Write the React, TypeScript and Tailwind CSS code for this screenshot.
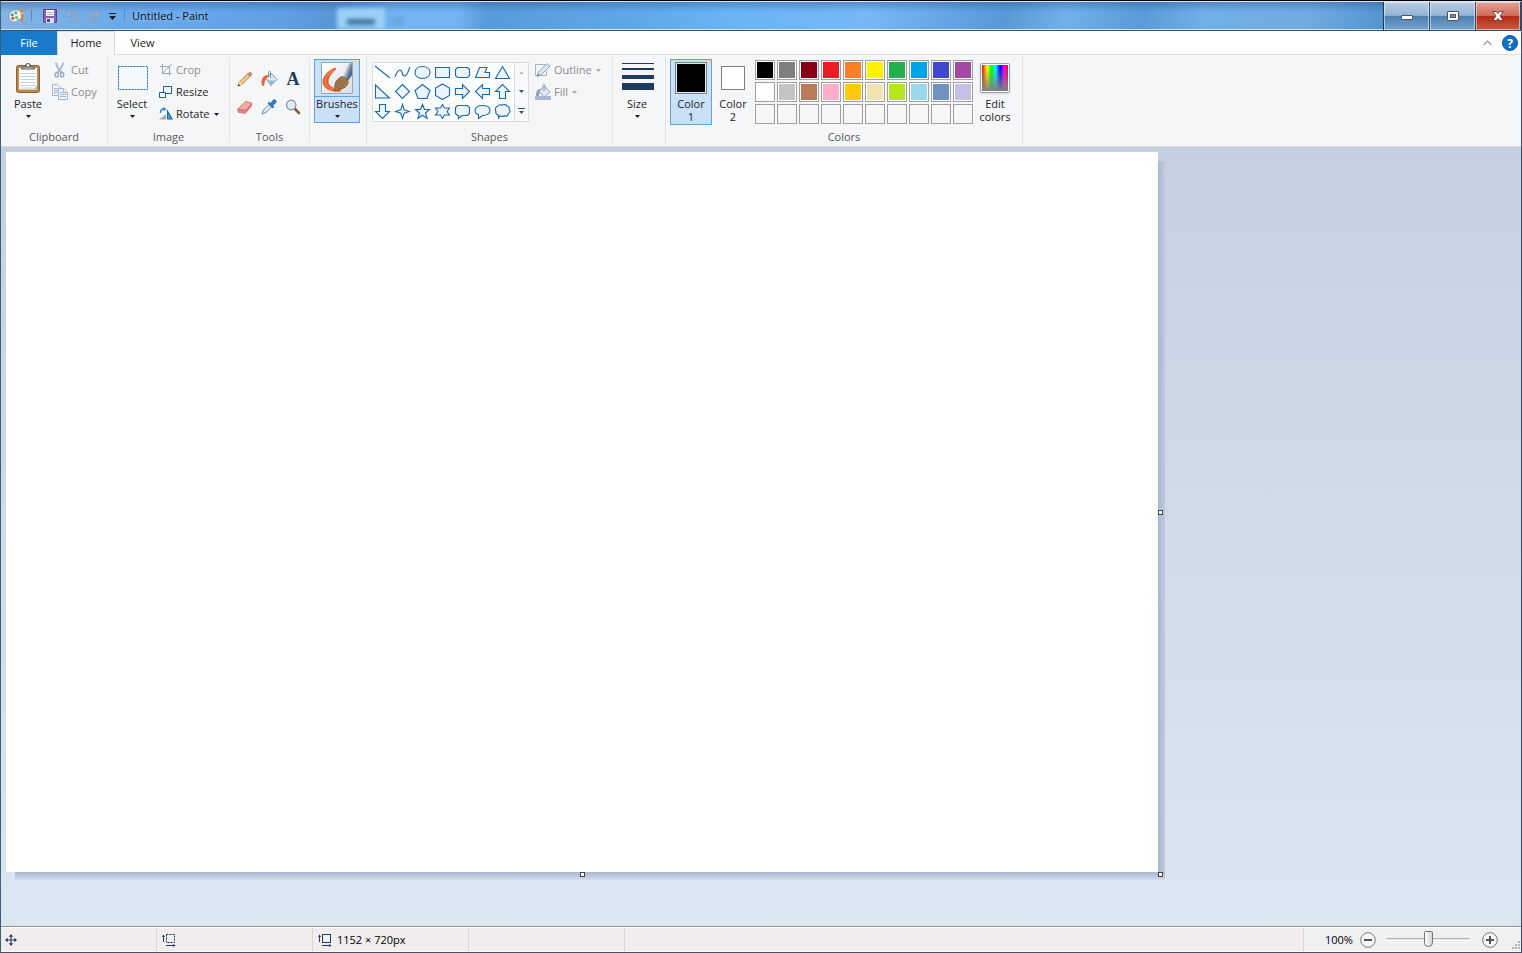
import type { ReactNode } from "react";

function Caret({ color = "#1e1e1e" }: { color?: string }) {
  return (
    <svg width="5" height="3" viewBox="0 0 5 3" className="shrink-0" aria-hidden="true">
      <path d="M0 0h5L2.5 3z" fill={color} />
    </svg>
  );
}

function Group({ label, className, children }: { label?: string; className: string; children: ReactNode }) {
  return (
    <section className={`flex shrink-0 flex-col pt-0.5 pb-[3px] ${className}`} aria-label={label}>
      <div className="flex min-h-0 flex-1 flex-col border-r border-[#e2e3e4]">
        <div className="flex h-[72px] shrink-0 items-start pt-0.5">{children}</div>
        <div className="text-center leading-4 text-[#5a5a5a]">{label}</div>
      </div>
    </section>
  );
}

function SmallButton({ icon, label, disabled, caret }: { icon: ReactNode; label: string; disabled?: boolean; caret?: boolean }) {
  return (
    <button disabled={disabled} className="flex h-[22px] items-center gap-[3px] text-[#1e1e1e] disabled:text-[#8d8d8d]">
      {icon}
      <span>{label}</span>
      {caret && (
        <span className="ml-px">
          <Caret color={disabled ? "#a8a8a8" : "#1e1e1e"} />
        </span>
      )}
    </button>
  );
}

function BigButton({ icon, label, className = "" }: { icon: ReactNode; label: string; className?: string }) {
  return (
    <button className={`flex h-16 flex-col items-center pt-[3px] text-[#1e1e1e] ${className}`}>
      {icon}
      <span className="mt-0.5 leading-4">{label}</span>
      <span className="mt-[3px]">
        <Caret />
      </span>
    </button>
  );
}

/* ---------- title bar icons ---------- */

function PaintLogo() {
  return (
    <svg width="17" height="17" viewBox="0 0 17 17" aria-hidden="true">
      <path d="M8 3C3.500 3 1 6 1 9.500c0 3.200 2.400 5.500 6 5.500 2.200 0 1.800-1.800 3-2.400 1.600-.8 4.500-.2 4.500-3.600C14.500 5.500 12 3 8 3z" fill="#e3f1f7" stroke="#6ea3bb" strokeWidth=".8" />
      <circle cx="4.300" cy="8" r="1.400" fill="#3a8bd0" />
      <circle cx="7.800" cy="5.800" r="1.400" fill="#45ad3e" />
      <circle cx="4.800" cy="11.500" r="1.400" fill="#d94b3a" />
      <circle cx="8.500" cy="10.500" r="1.500" fill="#58bd4f" />
      <path d="M12.700 6h3l-.6 9.500h-1.600z" fill="#e2812b" />
      <path d="M12.500 6c-.7-2 .8-2.600 1.500-5.500 1.200 1.600 2.300 3.600 1.700 5.500z" fill="#d9874a" />
      <path d="M12.500 5.500h3.200v1.600h-3.200z" fill="#c7cdd2" />
    </svg>
  );
}

function SaveIcon() {
  return (
    <svg width="14" height="14" viewBox="0 0 14 14" aria-hidden="true">
      <path d="M.5.500h13v13H1.500l-1-1z" fill="#8a5fb0" stroke="#5e3c8c" />
      <path d="M3 1h8v6H3z" fill="#f7f7fb" />
      <path d="M4 3.500h6M4 5.500h6" stroke="#b5b3cb" />
      <path d="M3 9h8v5H3z" fill="#d8dce6" />
      <path d="M4 10h3v3H4z" fill="#574679" />
    </svg>
  );
}

function UndoIcon({ flip }: { flip?: boolean }) {
  return (
    <svg width="14" height="14" viewBox="0 0 14 14" className={flip ? "-scale-x-100" : ""} aria-hidden="true">
      <path d="M1 1v6.500h6.500L5.300 5.300c3-1 5 .2 5 2.700 0 1.800-1.500 3-3.300 4.200l.5 1.300c3.500-.8 5.500-3 5.500-6C13 3.500 8.500 1 3.500 3.500z" fill="#93add0" stroke="#7b99c2" strokeWidth=".8" />
    </svg>
  );
}

/* ---------- clipboard and image icons ---------- */

function PasteIcon() {
  return (
    <svg width="26" height="32" viewBox="0 0 26 32" className="shrink-0" aria-hidden="true">
      <rect x="1.500" y="3.500" width="23" height="27" rx="2" fill="#b98b50" stroke="#8a612e" />
      <path d="M4 6h18v21.500H4z" fill="#fff" />
      <path d="M5 11.500h16M5 14.500h16M5 17.500h16M5 20.500h16M5 23.500h16M5 26h13" stroke="#c3d2e2" />
      <path d="M6 7.500c0-2.500 1.500-3 4-3 0-2 1-3.500 3-3.500s3 1.500 3 3.500c2.500 0 4 .5 4 3z" fill="#5f6468" />
      <path d="M8 6h10" stroke="#c9cdd0" />
      <circle cx="13" cy="3.200" r="1.300" fill="#f5f6f7" />
      <path d="M18 27.500l4-4v4z" fill="#b7c4d2" />
    </svg>
  );
}

function CutIcon() {
  return (
    <svg width="16" height="16" viewBox="0 0 16 16" fill="none" aria-hidden="true">
      <path d="M4 .5c0 3.500 1.500 5.500 5.500 10M11 .5c0 3.500-1.500 5.500-5.500 10" stroke="#a9b9d0" strokeWidth="1.900" />
      <ellipse cx="4.800" cy="12.700" rx="1.600" ry="2.200" stroke="#93a9c8" strokeWidth="1.400" />
      <ellipse cx="10.200" cy="12.700" rx="1.600" ry="2.200" stroke="#93a9c8" strokeWidth="1.400" />
    </svg>
  );
}

function CopyIcon() {
  return (
    <svg width="16" height="16" viewBox="0 0 16 16" fill="#eef3f9" stroke="#a5b7d0" aria-hidden="true">
      <path d="M.5.500h5l3 3v8h-8z" />
      <path d="M2 4.500h4M2 6.500h4M2 8.500h4" />
      <path d="M6.500 4.500h5l4 4v7h-9z" />
      <path d="M11.500 4.500v4h4M8 8.500h3M8 10.500h6M8 12.500h6" />
    </svg>
  );
}

function SelectIcon() {
  return (
    <svg width="32" height="32" viewBox="0 0 32 32" className="ml-px shrink-0" aria-hidden="true">
      <rect x="1.500" y="4.500" width="29" height="23" fill="#f3f9fd" stroke="#1a6bb0" strokeDasharray="2 1" />
    </svg>
  );
}

function CropIcon() {
  return (
    <svg width="14" height="16" viewBox="0 0 14 16" fill="none" stroke="#9aaac0" aria-hidden="true">
      <path d="M3.500 2v9.500H13M1 4.500h9.500V14M3.500 11.500l9-9.500" />
    </svg>
  );
}

function ResizeIcon() {
  return (
    <svg width="14" height="16" viewBox="0 0 14 16" fill="#f3f9fd" stroke="#1663a7" aria-hidden="true">
      <path d="M4.500 2.500h8v7h-8z" />
      <path d="M.5 8.500h6v5h-6z" />
    </svg>
  );
}

function RotateIcon() {
  return (
    <svg width="14" height="16" viewBox="0 0 14 16" aria-hidden="true">
      <path d="M0 13.500h7V8z" fill="#a5a9ad" />
      <path d="M8 3l6 10.500H8z" fill="#1b68a9" />
      <path d="M9 7l3 5.500H9z" fill="#4b9bd6" />
      <path d="M1.500 7c0-2.500 1-4 3.500-4" fill="none" stroke="#2c7bd0" strokeWidth="1.400" />
      <path d="M4.500 1l3 2-3 2z" fill="#2c7bd0" />
    </svg>
  );
}

/* ---------- tools ---------- */

const tools: { name: string; icon: ReactNode }[] = [
  {
    name: "Pencil",
    icon: (
      <>
        <path d="M1 15l1.500-4 8.500-8.500 2.500 2.500L5 13.500z" fill="#f1cd76" stroke="#8d7440" strokeWidth=".8" />
        <path d="M2.500 11l2.500 2.500L1 15z" fill="#f0dcc0" />
        <path d="M.8 15.200l.8-2.200 1.500 1.500z" fill="#222" />
        <path d="M10.800 2.800l1.400-1.400c1.500-.5 3 1 2.500 2.400l-1.400 1.400z" fill="#dc8b7b" stroke="#a35d4d" strokeWidth=".6" />
      </>
    ),
  },
  {
    name: "Fill with color",
    icon: (
      <>
        <path d="M5 7.500L10 2l6 6.500-6 6z" fill="#dcebf6" stroke="#6991b4" strokeWidth=".9" />
        <path d="M7 9.500h8l-5 4.500z" fill="#8dbadb" />
        <path d="M7.500 6V1.500c0-1.500 2-1.500 2 0V7" fill="none" stroke="#7d8e9e" />
        <path d="M.8 14C0 9.500 1 5 6 4l2 1.500C5 7 3.800 9 3.300 14c-.5 1.300-2 1.300-2.500 0z" fill="#e8663c" />
      </>
    ),
  },
  {
    name: "Text",
    icon: (
      <text x="8" y="14" textAnchor="middle" fontFamily="Liberation Serif, serif" fontWeight="bold" fontSize="18" fill="#1f3a5f">
        A
      </text>
    ),
  },
  {
    name: "Eraser",
    icon: (
      <>
        <path d="M.7 10L8.500 2.500 15 4l-6.500 7.500z" fill="#f2aaa2" stroke="#c46b64" strokeWidth=".8" />
        <path d="M.7 10l7.800 1.500v3.200L1 13.200z" fill="#e08a82" stroke="#c46b64" strokeWidth=".6" />
        <path d="M15 4v3l-6.500 7.500v-3z" fill="#d9756e" />
      </>
    ),
  },
  {
    name: "Color picker",
    icon: (
      <>
        <path d="M1 15l1.500-4L8 5.500l2.500 2.500L5 13.500z" fill="#dcebf5" stroke="#67809a" strokeWidth=".9" />
        <path d="M7 4l1.300-.7L9.500 4.500 12 1.300c2-1.500 4 .7 2.700 2.700L11.500 6.500l1.200 1.300-.9 1.300z" fill="#2f7cc4" stroke="#1c5590" strokeWidth=".7" />
      </>
    ),
  },
  {
    name: "Magnifier",
    icon: (
      <>
        <path d="M10 10l4 4" stroke="#8a5b3b" strokeWidth="2.600" strokeLinecap="round" />
        <circle cx="6.200" cy="6" r="4.700" fill="#dcecf8" stroke="#8c96a0" strokeWidth="1.400" />
        <path d="M3.500 5c.5-1.400 1.600-2 3-2" stroke="#fff" fill="none" />
      </>
    ),
  },
];

function BrushIcon() {
  return (
    <svg width="32" height="32" viewBox="0 0 32 32" className="shrink-0" aria-hidden="true">
      <defs>
        <linearGradient id="ferrule" x1="0" y1="0" x2="1" y2=".7">
          <stop offset="0" stopColor="#8d99a8" />
          <stop offset=".35" stopColor="#f8fafc" />
          <stop offset=".7" stopColor="#7688a0" />
          <stop offset="1" stopColor="#2b4a74" />
        </linearGradient>
        <linearGradient id="card" x1="0" y1="0" x2="1" y2="1">
          <stop offset="0" stopColor="#ffffff" />
          <stop offset="1" stopColor="#d5dce3" />
        </linearGradient>
      </defs>
      <path d="M.5.500h31v31H.5z" fill="url(#card)" stroke="#99a7b5" />
      <path d="M14.500 5.500C8 8 2.500 13 1.500 19c0 7 7 11 17 11l3-3.500c-8 1-14-2-14-6.500 0-5 3.500-9 7.500-12.500z" fill="#e85d2c" />
      <path d="M12.500 8C8 11 4.500 15 4 19.500c.5 4.500 5 7.500 11 8" fill="none" stroke="#f48a5c" strokeWidth="1.200" />
      <path d="M20.500 14.500L28 1.500l3-.5v12l-4.500 6.500z" fill="url(#ferrule)" />
      <path d="M20.500 14.500l6 5" stroke="#5b6878" />
      <path d="M13.500 28.500c.5-4 0-8 3-11 3-3.500 6-3 8.500-1 3 3 2.500 5.500 0 8-3 3-6 1.500-11.500 4z" fill="#a67b50" stroke="#76522f" strokeWidth=".8" />
      <path d="M15.500 26c1.500-3 1-6 4-9M17.500 25.500c3-2 2-5 4.500-8.500M20 25c3-2 3-4 4.500-6.500" stroke="#7b5733" fill="none" strokeWidth=".7" />
    </svg>
  );
}

/* ---------- shapes gallery ---------- */

const shapes: [string, string][] = [
  ["Line", "M1 2l15 12"],
  ["Curve", "M1 13c1.500-4 3-7 5-7 3 0 1.500 6 4.500 6S14 7 16 3"],
  ["Oval", "M8.500 2.500c4.500 0 7.500 2.500 7.500 6s-3 6-7.500 6S1 12 1 8.500s3-6 7.500-6z"],
  ["Rectangle", "M1.500 3.500h14v10h-14z"],
  ["Rounded rectangle", "M3.500 3.500h10l2 2v6l-2 2h-10l-2-2v-6z"],
  ["Polygon", "M5.500 3.500h7.500l-2 5h4.500v5H1.500z"],
  ["Triangle", "M8.500 2.500l7 12h-14z"],
  ["Right triangle", "M1.500 2v13h14z"],
  ["Diamond", "M8.500 1.500l7 7-7 7-7-7z"],
  ["Pentagon", "M8.500 1.500l7.500 6-3 8H4l-3-8z"],
  ["Hexagon", "M8.500 1l7 4v7.500l-7 4-7-4V5z"],
  ["Right arrow", "M1.500 5.500h7v-4l7 7-7 7v-4h-7z"],
  ["Left arrow", "M15.500 5.500h-7v-4l-7 7 7 7v-4h7z"],
  ["Up arrow", "M5.500 15.500v-7h-4l7-7 7 7h-4v7z"],
  ["Down arrow", "M5.500 1.500v7h-4l7 7 7-7h-4v-7z"],
  ["Four-point star", "M8.500 1.500l1.700 5.300 5.300 1.700-5.300 1.700-1.700 5.300-1.700-5.300-5.300-1.700 5.300-1.700z"],
  ["Five-point star", "M8.500 1.500l2 5h5l-4 3.500 1.600 5.500-4.600-3.300-4.600 3.300L5.500 10l-4-3.500h5z"],
  ["Six-point star", "M8.500 1.500l2 3.500h5L13 8.500l2.500 3.500h-5l-2 3.500-2-3.500h-5L4 8.500 1.500 5h5z"],
  ["Rounded callout", "M3.500 2.500h10l2 2v6l-2 2H8L4.500 15.500v-3h-1l-2-2v-6z"],
  ["Oval callout", "M8.500 2.500c4.500 0 7.500 2 7.500 5s-3 5-7.500 5L4.500 15.500v-3.700C2.500 11 1 9.500 1 7.500c0-3 3-5 7.500-5z"],
  ["Cloud callout", "M4 3c1-1.500 3-1.500 4-.7 2-1.300 4-.8 4.700.7 2 0 3 1.500 2.300 3 1.500 1.700 1.200 4-.8 4.700 0 2.300-2.200 3-4 2-1.500 1.200-3.500 1-4.200 0L4.500 15v-2.800C2.500 12 1.300 10 2 8.500.8 6.500 1.500 3.500 4 3z"],
];

function ShapesGallery() {
  return (
    <div className="flex h-[60px] w-[157px] shrink-0 border border-[#dcdddf] bg-[#fbfcfd]">
      <div className="grid grid-cols-[repeat(7,20px)] grid-rows-3">
        {shapes.map(([name, d]) => (
          <button key={name} aria-label={name} className="flex min-h-0 items-center">
            <svg width="17" height="17" viewBox="0 0 17 17" className="ml-px" fill={name === "Curve" || name === "Line" ? "none" : "#eaf4fa"} stroke="#1c69aa" strokeWidth="1.100" aria-hidden="true">
              <path d={d} />
            </svg>
          </button>
        ))}
      </div>
      <div className="ml-px flex flex-1 flex-col border-l border-[#dcdddf] bg-[#f8f9fa]">
        <button aria-label="Scroll up" className="flex flex-1 rotate-180 items-center justify-center">
          <Caret color="#b4bac4" />
        </button>
        <button aria-label="Scroll down" className="flex flex-1 items-center justify-center">
          <Caret color="#3d4e66" />
        </button>
        <button aria-label="More shapes" className="flex flex-1 flex-col items-center justify-center gap-0.5">
          <span className="h-px w-[7px] bg-[#3d4e66]" />
          <Caret color="#3d4e66" />
        </button>
      </div>
    </div>
  );
}

function OutlineIcon() {
  return (
    <svg width="16" height="16" viewBox="0 0 16 16" aria-hidden="true">
      <path d="M11 2.500H.5v11h11V9" fill="none" stroke="#a5b4c8" />
      <path d="M2 14.500l1.500-4.500L12 1.500l3 2.500-9 9z" fill="#dde5ef" stroke="#92a4bd" />
      <path d="M2 14.500l1-3 2 2z" fill="#7f91aa" />
    </svg>
  );
}

function FillIcon() {
  return (
    <svg width="16" height="16" viewBox="0 0 16 16" aria-hidden="true">
      <path d="M0 12h16v4H0z" fill="#a8b9d2" />
      <path d="M4 7l5.500-5 5.500 6-6 5z" fill="#e3eaf3" stroke="#93a5be" />
      <path d="M8 7V1.500C8 0 10 0 10 1.500V7" fill="none" stroke="#93a5be" />
      <path d="M1 12c0-5 1-7 4.500-7L4 12z" fill="#8fa2bd" />
    </svg>
  );
}

/* ---------- colors ---------- */

const palette: (string | null)[] = [
  "#000000", "#7f7f7f", "#880015", "#ed1c24", "#ff7f27", "#fff200", "#22b14c", "#00a2e8", "#3f48cc", "#a349a4",
  "#ffffff", "#c3c3c3", "#b97a57", "#ffaec9", "#ffc90e", "#efe4b0", "#b5e61d", "#99d9ea", "#7092be", "#c8bfe7",
  null, null, null, null, null, null, null, null, null, null,
];

function EditColorsIcon() {
  return (
    <span className="flex h-[30px] w-[30px] shrink-0 rounded-xs border border-[#a0a0a0] bg-white p-px shadow-sm">
      <span className="flex-1 bg-[linear-gradient(to_bottom,transparent_10%,#808080),linear-gradient(to_right,#f00,#ff0_20%,#0f0_36%,#0ff_52%,#00f_70%,#f0f_86%,#f00)]" />
    </span>
  );
}

/* ---------- status bar ---------- */

function StatusCell({ children }: { children?: ReactNode }) {
  return <div className="flex w-[156px] items-center gap-[5px] border-r border-[#d7d5d5] pl-1">{children}</div>;
}

function SizeIcon({ dashed }: { dashed?: boolean }) {
  return (
    <svg width="14" height="14" viewBox="0 0 14 14" fill="none" stroke="#1f3a66" className="ml-px" aria-hidden="true">
      <rect x="4.500" y="1.500" width="8" height="8" fill={dashed ? "none" : "#eef6fb"} strokeDasharray={dashed ? "2 1" : undefined} />
      <path d="M1.500 2v7M4 12.500h8" />
      <path d="M0 4l1.500-2.500L3 4zM11 11l2.500 1.500L11 14z" fill="#1f3a66" stroke="none" />
    </svg>
  );
}

function Handle({ className }: { className: string }) {
  return <span className={`absolute h-[5px] w-[5px] border border-[#3f4247] bg-white ${className}`} />;
}

const captionButton =
  "flex items-center justify-center border-r border-[#31465f] shadow-[inset_0_0_0_1px_rgba(255,255,255,0.5)]";

export default function App() {
  return (
    <div className="flex h-screen min-h-[400px] flex-col overflow-hidden border border-t-black border-r-[#33506d] border-b-[#34586c] border-l-[#3a5f7d] bg-[#f5f6f7] font-['Open_Sans',sans-serif] text-[11px] leading-4 text-[#1e1e1e]">
      <header className="flex h-[30px] shrink-0 border-t border-b border-t-[#d5e7f7] border-b-[#2f5478] bg-[linear-gradient(to_bottom,rgba(45,90,150,0.45),transparent_35%),linear-gradient(100deg,#85b4e2,#6aaaea_8%,#62a5ea_14%,#5f9fe2_19%,#5795d5_22%,#72b5f2_26%,#72b5f2_30%,#569bd9_32%,#5ea8e8_42%,#69b4f5_48%,#74b8f5_57%,#5799d6_66%,#70b1ec_70%,#579bd8_75%,#70afe8_79%,#6fabe2_86%,#5293d0_91%)]">
        <div className="flex min-w-0 flex-1 items-center border-b border-[#cfe4f6] pl-[7px]">
          <PaintLogo />
          <span className="ml-1.5 h-[11px] w-px bg-[#5f88b5]" />
          <button aria-label="Save" className="ml-[11px]"><SaveIcon /></button>
          <button aria-label="Undo" disabled className="ml-2"><UndoIcon /></button>
          <button aria-label="Redo" disabled className="ml-2"><UndoIcon flip /></button>
          <button aria-label="Customize toolbar" className="ml-2 flex w-[7px] flex-col items-center gap-0.5 pt-0.5">
            <span className="h-px w-[7px] bg-[#10202f]" />
            <svg width="7" height="4" viewBox="0 0 7 4" aria-hidden="true"><path d="M0 0h7L3.500 4z" fill="#10202f" /></svg>
          </button>
          <span className="ml-2 h-[11px] w-px bg-[#5f88b5]" />
          <h1 className="ml-[7px] whitespace-nowrap text-[#0b1320] [text-shadow:0_0_6px_rgba(255,255,255,0.6)]">Untitled - Paint</h1>
          <div className="flex h-full items-end gap-1.5 overflow-hidden pl-32" aria-hidden="true">
            <div className="flex h-[21px] w-[48px] items-center justify-center bg-[#9dd0f8] pt-1.5 blur-[2px]">
              <span className="h-1.5 w-7 bg-[#43769f]" />
            </div>
            <div className="mb-1 h-2 w-3.5 bg-[#4b8ac4] opacity-40 blur-[3px]" />
          </div>
        </div>
        <div className="flex w-[138px] shrink-0 border-l border-[#20364d]">
          <button aria-label="Minimize" className={`w-[46px] bg-[linear-gradient(to_bottom,#b9cde3,#93b4d5_48%,#4d7eaf_50%,#76a5d0)] ${captionButton}`}>
            <svg width="14" height="6" viewBox="0 0 14 6" className="mt-1" aria-hidden="true"><rect x="1.500" y=".5" width="11" height="4" rx=".5" fill="#fff" stroke="#4c5763" /></svg>
          </button>
          <button aria-label="Maximize" className={`w-[46px] bg-[linear-gradient(to_bottom,#b9cde3,#93b4d5_48%,#4d7eaf_50%,#76a5d0)] ${captionButton}`}>
            <svg width="12" height="10" viewBox="0 0 12 10" aria-hidden="true">
              <rect x=".5" y=".5" width="11" height="9" rx=".5" fill="#fff" stroke="#4c5763" />
              <rect x="3.500" y="3.500" width="5" height="3" fill="#6c98c3" stroke="#4c5763" />
            </svg>
          </button>
          <button aria-label="Close" className={`flex-1 bg-[linear-gradient(to_bottom,#e4a297,#cf6d5c_48%,#b12a17_50%,#cd5b3c)] ${captionButton}`}>
            <svg width="12" height="10" viewBox="0 0 12 10" aria-hidden="true">
              <path d="M.8.500h3.400L6 2.600 7.800.500h3.400L8 5l3.200 4.500H7.800L6 7.400 4.200 9.500H.8L4 5z" fill="#fff" stroke="#59404a" strokeWidth=".9" />
            </svg>
          </button>
        </div>
      </header>

      <nav className="flex h-6 shrink-0 bg-white">
        <button className="w-14 bg-[#1979ca] text-white">File</button>
        <button className="w-[58px] border-x border-t border-[#dadbdc] bg-[#f5f6f7] pb-px">Home</button>
        <button className="w-[55px] border-b border-[#dadbdc]">View</button>
        <div className="flex flex-1 items-center justify-end gap-2.5 border-b border-[#dadbdc] pr-[3px]">
          <button aria-label="Collapse the ribbon">
            <svg width="9" height="6" viewBox="0 0 9 6" fill="none" stroke="#979797" strokeWidth="1.200" aria-hidden="true"><path d="M.5 5l4-4 4 4" /></svg>
          </button>
          <button aria-label="Help">
            <svg width="16" height="16" viewBox="0 0 16 16" aria-hidden="true">
              <circle cx="8" cy="8" r="7.500" fill="#1470c6" stroke="#0c539c" />
              <text x="8" y="12.500" textAnchor="middle" fontSize="12" fontWeight="bold" fill="#fff">?</text>
            </svg>
          </button>
        </div>
      </nav>

      <div className="flex h-[92px] shrink-0 border-b border-[#d7d9dc] bg-[#f5f6f7]">
        <Group label="Clipboard" className="w-[107px]">
          <BigButton icon={<PasteIcon />} label="Paste" className="ml-[5px] w-11" />
          <div className="ml-0.5 flex flex-col">
            <SmallButton icon={<CutIcon />} label="Cut" disabled />
            <SmallButton icon={<CopyIcon />} label="Copy" disabled />
          </div>
        </Group>
        <Group label="Image" className="w-[122px]">
          <BigButton icon={<SelectIcon />} label="Select" className="ml-px w-[46px]" />
          <div className="ml-1 flex flex-col">
            <SmallButton icon={<CropIcon />} label="Crop" disabled />
            <SmallButton icon={<ResizeIcon />} label="Resize" />
            <SmallButton icon={<RotateIcon />} label="Rotate" caret />
          </div>
        </Group>
        <Group label="Tools" className="w-20">
          <div className="mt-1.5 ml-[3px] grid grid-cols-[24px_24px_24px] grid-rows-[28px_28px]">
            {tools.map((tool) => (
              <button key={tool.name} aria-label={tool.name} className="flex items-center justify-center">
                <svg width="16" height="16" viewBox="0 0 16 16" className="overflow-visible" aria-hidden="true">{tool.icon}</svg>
              </button>
            ))}
          </div>
        </Group>
        <Group className="w-[57px]">
          <button className="ml-1 flex h-16 w-[46px] flex-col items-center border border-[#5fa2e4] bg-[#c9e0f7]">
            <span className="flex h-[37px] w-full items-center justify-center border-b border-[#5fa2e4]"><BrushIcon /></span>
            <span className="-mt-px leading-4">Brushes</span>
            <span className="mt-[3px]"><Caret /></span>
          </button>
        </Group>
        <Group label="Shapes" className="w-[246px]">
          <div className="mt-[3px] ml-[5px]"><ShapesGallery /></div>
          <div className="ml-1.5 flex flex-col">
            <SmallButton icon={<OutlineIcon />} label="Outline" disabled caret />
            <SmallButton icon={<FillIcon />} label="Fill" disabled caret />
          </div>
        </Group>
        <Group className="w-[53px]">
          <BigButton
            label="Size"
            className="ml-px w-[46px]"
            icon={
              <svg width="32" height="32" viewBox="0 0 32 32" className="ml-px shrink-0" fill="#1f3a5f" aria-hidden="true">
                <path d="M0 1h32v1H0zM0 6h32v2H0zM0 13h32v4H0zM0 21h32v7H0z" />
              </svg>
            }
          />
        </Group>
        <Group label="Colors" className="w-[357px]">
          <button className="ml-1 flex h-[66px] w-[42px] flex-col items-center border border-[#5fa2e4] bg-[#c9e0f7] pt-0.5 leading-[13px]">
            <span className="h-8 w-8 shrink-0 border border-[#808080] bg-black shadow-[inset_0_0_0_1px_#dbe9f8]" />
            <span className="mt-[3px]">Color</span>
            <span>1</span>
          </button>
          <button className="flex h-[66px] w-[42px] flex-col items-center pt-[7px] leading-[13px]">
            <span className="h-6 w-6 shrink-0 border border-[#808080] bg-white" />
            <span className="mt-[7px]">Color</span>
            <span>2</span>
          </button>
          <div className="mt-px ml-px grid grid-cols-10 gap-0.5">
            {palette.map((color, i) => (
              <button
                key={i}
                aria-label={color ?? "Empty custom color"}
                className={`h-5 w-5 border border-[#a0a0a0] p-px ${color ? "bg-white" : ""}`}
              >
                {color && <span className="block h-full" style={{ backgroundColor: color }} />}
              </button>
            ))}
          </div>
          <button className="flex h-[66px] w-11 flex-col items-center pt-1 leading-[13px]">
            <EditColorsIcon />
            <span className="mt-1">Edit</span>
            <span>colors</span>
          </button>
        </Group>
      </div>

      <main className="min-h-0 flex-1 overflow-hidden bg-linear-to-b from-[#c5cfe0] to-[#dce6f1] pt-[5px] pl-[5px]">
        <div className="relative h-[720px] w-[1152px] bg-white">
          <span className="absolute top-[9px] left-full h-[711px] w-[7px] bg-linear-to-r from-[#a9b8cf] to-[#bfcadd]" />
          <span className="absolute top-full right-[-7px] left-[9px] h-2 bg-linear-to-b from-[#a9b6cd] to-[#d1dceb]" />
          <Handle className="top-[358px] left-full" />
          <Handle className="top-full left-[574px]" />
          <Handle className="top-full left-full" />
        </div>
      </main>

      <footer className="flex h-[26px] shrink-0 border-t border-b border-t-[#919191] border-b-white bg-[#f1edec] pt-px shadow-[inset_0_1px_0_#fff]">
        <StatusCell>
          <svg width="12" height="12" viewBox="0 0 11 11" fill="#1f3a66" aria-hidden="true">
            <path d="M5 1h1v4h4v1H6v4H5V6H1V5h4z" />
            <path d="M3.500 2.500L5.500 0l2 2.500zM3.500 8.500l2 2.500 2-2.500zM2.500 3.500L0 5.500l2.500 2zM8.500 3.500l2.500 2-2.500 2z" />
          </svg>
        </StatusCell>
        <StatusCell><SizeIcon dashed /></StatusCell>
        <StatusCell>
          <SizeIcon />
          <span className="text-black">1152 × 720px</span>
        </StatusCell>
        <StatusCell />
        <div className="flex-1 border-r border-[#d7d5d5]" />
        <div className="flex w-[217px] items-center bg-[#f0f0f0] pl-[21px]">
          <span className="w-[35px] text-black">100%</span>
          <button aria-label="Zoom out">
            <svg width="16" height="16" viewBox="0 0 16 16" aria-hidden="true">
              <circle cx="8" cy="8" r="7.300" fill="#f7f7f7" stroke="#777" />
              <path d="M4 7h8v2H4z" fill="#555" />
            </svg>
          </button>
          <input
            type="range"
            aria-label="Zoom"
            defaultValue={50}
            className="mx-2.5 h-4 w-[84px] appearance-none bg-transparent [&::-webkit-slider-runnable-track]:h-[3px] [&::-webkit-slider-runnable-track]:border-t [&::-webkit-slider-runnable-track]:border-b [&::-webkit-slider-runnable-track]:border-t-[#b0b4b4] [&::-webkit-slider-runnable-track]:border-b-white [&::-webkit-slider-runnable-track]:bg-[#e3e9e6] [&::-webkit-slider-thumb]:-mt-2 [&::-webkit-slider-thumb]:h-4 [&::-webkit-slider-thumb]:w-[9px] [&::-webkit-slider-thumb]:appearance-none [&::-webkit-slider-thumb]:rounded-t-[2px] [&::-webkit-slider-thumb]:rounded-b-[5px] [&::-webkit-slider-thumb]:border [&::-webkit-slider-thumb]:border-[#6f7375] [&::-webkit-slider-thumb]:bg-linear-to-r [&::-webkit-slider-thumb]:from-white [&::-webkit-slider-thumb]:to-[#d2d4d5]"
          />
          <button aria-label="Zoom in" className="ml-0.5">
            <svg width="16" height="16" viewBox="0 0 16 16" aria-hidden="true">
              <circle cx="8" cy="8" r="7.300" fill="#f7f7f7" stroke="#777" />
              <path d="M4 7h3V4h2v3h3v2H9v3H7V9H4z" fill="#555" />
            </svg>
          </button>
          <svg width="9" height="9" viewBox="0 0 9 9" fill="#b5b5b5" className="mt-3 ml-3.5" aria-hidden="true">
            <path d="M6 0h2v2H6zM3 3h2v2H3zM6 3h2v2H6zM0 6h2v2H0zM3 6h2v2H3zM6 6h2v2H6z" />
          </svg>
        </div>
      </footer>
    </div>
  );
}
